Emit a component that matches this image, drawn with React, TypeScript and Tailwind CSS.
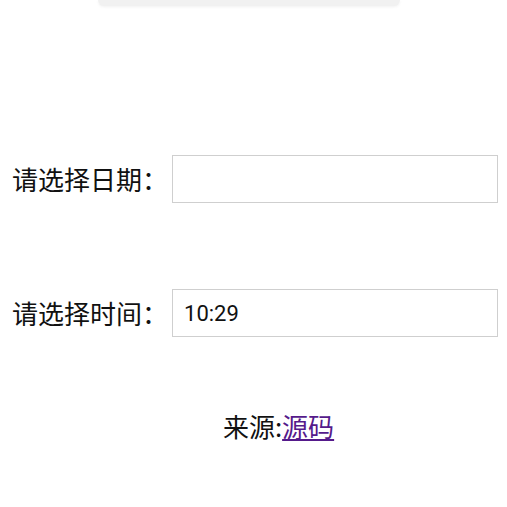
const cjk = "font-['Noto_Sans_CJK_SC','Noto_Sans',sans-serif]";

const Field = ({ label, value }: { label: string; value: string }) => {
    return (
        <div className="flex items-center pl-[12px] pr-[9px]">
            <span className={`${cjk} text-[26px] leading-[36px] text-[#111] whitespace-nowrap`}>{label}</span>
            <input
                type="text"
                readOnly
                value={value}
                className="ml-[4px] flex-1 h-[48px] border border-[#cfcfcf] bg-white px-[11px] font-['Roboto',sans-serif] text-[22px] text-[#111] outline-none"
            />
        </div>
    )
}

export default function App() {
    return (
        <div className="w-[507px] h-[507px] bg-white overflow-hidden">
            <div className="ml-[98px] w-[302px] h-[6px] rounded-b-[14px] bg-[#f1f1f1] shadow-[0_1px_3px_rgba(0,0,0,0.06)]"></div>

            <div className="mt-[149px]">
                <Field label="请选择日期：" value="" />
            </div>

            <div className="mt-[86px]">
                <Field label="请选择时间：" value="10:29" />
            </div>

            <p className={`${cjk} mt-[71px] pl-[50px] text-center text-[26px] leading-[36px] text-[#111]`}>
                来源:<a href="#" className="text-[#551a8b] underline">源码</a>
            </p>
        </div>
    )
}
